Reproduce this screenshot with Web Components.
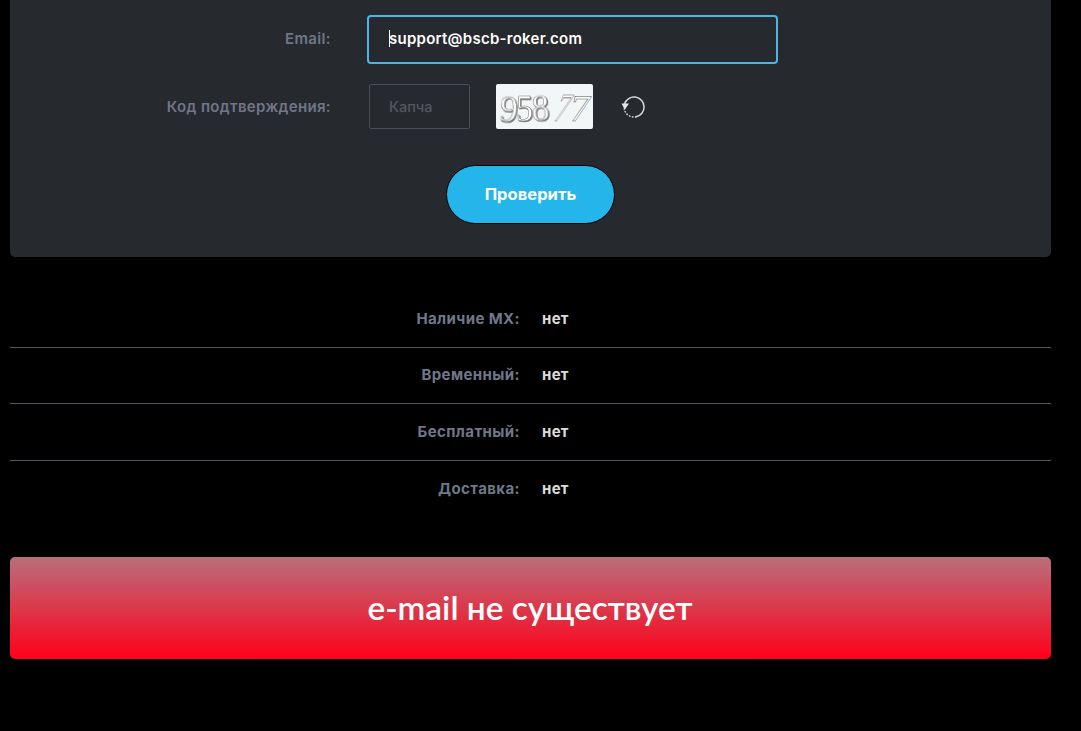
<!DOCTYPE html>
<html lang="ru">
<head>
<meta charset="utf-8">
<title>Проверка email</title>
<style>
  html, body { margin: 0; background: #000; }
  body { font-family: Inter, "Open Sans", sans-serif; height: 731px; overflow: hidden; }
</style>
</head>
<body>
<check-page>
  <check-panel>
    <form-row label="Email:" first>
      <text-field value="support@bscb-roker.com"></text-field>
    </form-row>
    <form-row label="Код подтверждения:">
      <captcha-box></captcha-box>
    </form-row>
    <pill-button>Проверить</pill-button>
  </check-panel>
  <result-list>
    <result-row label="Наличие MX:" value="нет"></result-row>
    <result-row label="Временный:" value="нет"></result-row>
    <result-row label="Бесплатный:" value="нет"></result-row>
    <result-row label="Доставка:" value="нет" last></result-row>
  </result-list>
  <status-banner>e-mail не существует</status-banner>
</check-page>

<script>
const define = (name, html, extra) => {
  customElements.define(name, class extends HTMLElement {
    constructor() {
      super();
      const root = this.attachShadow({ mode: 'open' });
      root.innerHTML = html;
      if (extra) extra(this, root);
    }
  });
};

define('check-page', `
  <style>
    :host { display: block; width: 1041px; padding: 0 30px 0 10px; }
  </style>
  <slot></slot>
`);

define('check-panel', `
  <style>
    :host {
      display: block;
      height: 242px;
      padding-top: 15px;
      background: #26292e;
      border-radius: 0 0 5px 5px;
    }
    .rows { display: flex; flex-direction: column; }
  </style>
  <div class="rows"><slot></slot></div>
`);

define('form-row', `
  <style>
    :host {
      display: grid;
      grid-template-columns: 321px 1fr;
      column-gap: 36px;
      align-items: center;
      margin-bottom: 20px;
    }
    .label {
      text-align: right;
      font-size: 15px;
      line-height: 18px;
      font-weight: 600;
      color: #6f7788;
      letter-spacing: 0.35px;
    }
    :host([first]) .label { margin-top: -2px; }
  </style>
  <div class="label"></div>
  <div><slot></slot></div>
`, (el, root) => {
  root.querySelector('.label').textContent = el.getAttribute('label');
});

define('text-field', `
  <style>
    :host {
      display: flex;
      align-items: center;
      box-sizing: border-box;
      width: 411px;
      height: 49px;
      padding: 0 0 2px 20px;
      border: 2px solid #4eb5e2;
      border-radius: 4px;
      background: #26292e;
      color: #fff;
      font-size: 15px;
      font-weight: 600;
      letter-spacing: 0.26px;
    }
    .caret { width: 1px; height: 17px; background: #fff; margin-right: -1px; }
  </style>
  <span class="caret"></span><span class="v"></span>
`, (el, root) => {
  root.querySelector('.v').textContent = el.getAttribute('value');
});

define('captcha-box', `
  <style>
    :host { display: flex; align-items: center; margin-left: 2px; }
    .input {
      box-sizing: border-box;
      width: 101px;
      height: 45px;
      display: flex;
      align-items: center;
      padding-left: 19px;
      border: 1px solid #4a4e55;
      border-radius: 2px;
      color: #54575c;
      font-size: 14.5px;
      font-weight: 500;
    }
    .image {
      display: block;
      width: 97px;
      height: 45px;
      margin-left: 26px;
      border-radius: 2px;
      background: #f3f6f7;
      overflow: visible;
    }
    .image text {
      font-family: "Liberation Serif", serif;
      font-size: 38px;
      fill: #fff;
      stroke: #7d7d7d;
      stroke-width: 0.6px;
      filter: drop-shadow(1px 1px 0 #777);
    }
    .image text.thin { fill: #fff; stroke: #555; stroke-width: 0.5px; filter: none; }
    .refresh { margin-left: 27px; display: block; position: relative; top: 1px; }
  </style>
  <div class="input">Капча</div>
  <svg class="image" viewBox="0 0 97 45">
    <text transform="translate(3 37) rotate(4) scale(.95 1)">9</text>
    <text transform="translate(20 37) scale(.9 1)">5</text>
    <text transform="translate(36 37) rotate(-3) scale(.95 1)">8</text>
    <text class="thin" transform="translate(56 37) skewX(-20) scale(.7 1.05)">7</text>
    <text class="thin" transform="translate(72 37) skewX(-10) scale(1.05 1)">7</text>
  </svg>
  <svg class="refresh" width="25" height="25" viewBox="0 0 25 25" fill="none" stroke-linecap="round">
    <path d="M4.5 9A10 10 0 1 1 16 21.8" stroke="#d7d9db" stroke-width="1.5"/>
    <path d="M16 21.8A10 10 0 0 1 4.2 14" stroke="#d7d9db" stroke-width="1.5" stroke-dasharray="0.5 2.6"/>
    <path d="M1.5 8.5h7.5l-4.2 6.3z" fill="#e4e6e8"/>
  </svg>
`);

define('pill-button', `
  <style>
    :host {
      display: flex;
      justify-content: center;
      margin: 16px 0 0 0;
    }
    .btn {
      box-sizing: border-box;
      width: 169px;
      height: 59px;
      padding-bottom: 2px;
      display: flex;
      align-items: center;
      justify-content: center;
      background: #24b6ea;
      border: 1px solid #000;
      border-radius: 30px;
      color: #fff;
      font-size: 16.6px;
      font-weight: 700;
    }
  </style>
  <div class="btn"><slot></slot></div>
`);

define('result-list', `
  <style>
    :host { display: block; padding-top: 34px; }
  </style>
  <slot></slot>
`);

define('result-row', `
  <style>
    :host {
      display: grid;
      grid-template-columns: 510px 1fr;
      column-gap: 22px;
      align-items: center;
      box-sizing: border-box;
      height: 56.5px;
      padding-bottom: 1px;
      border-bottom: 1px solid #565863;
      font-size: 15px;
      font-weight: 700;
    }
    :host([last]) { border-bottom: 0; }
    .label { text-align: right; color: #6f7788; letter-spacing: 0.4px; }
    .value { color: #dcdcdc; letter-spacing: 0.3px; }
  </style>
  <div class="label"></div>
  <div class="value"></div>
`, (el, root) => {
  root.querySelector('.label').textContent = el.getAttribute('label');
  root.querySelector('.value').textContent = el.getAttribute('value');
});

define('status-banner', `
  <style>
    :host {
      display: flex;
      align-items: center;
      justify-content: center;
      height: 102px;
      margin: 40px 0 0 0;
      padding: 0 1px 3px 0;
      box-sizing: border-box;
      border-radius: 5px;
      background: linear-gradient(#b96f7c, #ff0019);
      color: #fff;
      font-family: Lato, sans-serif;
      font-size: 33.4px;
      font-weight: 600;
    }
  </style>
  <slot></slot>
`);
</script>
</body>
</html>
